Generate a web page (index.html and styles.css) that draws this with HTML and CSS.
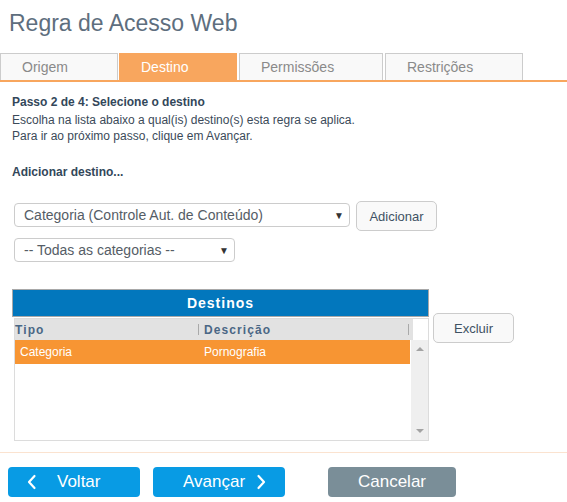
FILE: index.html
```html
<!DOCTYPE html>
<html lang="pt">
<head>
<meta charset="utf-8">
<title>Regra de Acesso Web</title>
<link rel="stylesheet" href="styles.css">
</head>
<body>
<h1 class="title">Regra de Acesso Web</h1>
<nav class="tabs">
  <div class="tab tab-origem">Origem</div>
  <div class="tab tab-destino active">Destino</div>
  <div class="tab tab-perm">Permissões</div>
  <div class="tab tab-restr">Restrições</div>
</nav>
<main class="content">
  <p class="step-title">Passo 2 de 4: Selecione o destino</p>
  <p class="desc">Escolha na lista abaixo a qual(is) destino(s) esta regra se aplica.<br>Para ir ao próximo passo, clique em Avançar.</p>
  <p class="add-label">Adicionar destino...</p>
  <div class="select-row">
    <div class="select select-main"><span>Categoria (Controle Aut. de Conteúdo)</span><span class="caret">▼</span></div>
    <button class="btn-light btn-add">Adicionar</button>
  </div>
  <div class="select select-sub"><span>-- Todas as categorias --</span><span class="caret">▼</span></div>
  <div class="table-row">
    <div class="table-wrap">
      <div class="table-title">Destinos</div>
      <div class="table-box">
        <div class="thead">
          <div class="thead-cols">
            <span class="th th-tipo">Tipo</span>
            <span class="sep"></span>
            <span class="th th-desc">Descrição</span>
            <span class="sep sep-end"></span>
          </div>
        </div>
        <div class="tbody-wrap">
          <div class="tbody">
            <div class="tr selected"><span class="td td-tipo">Categoria</span><span class="td">Pornografia</span></div>
          </div>
          <div class="scrollbar">
            <span class="arrow up"></span>
            <span class="arrow down"></span>
          </div>
        </div>
      </div>
    </div>
    <button class="btn-light btn-excluir">Excluir</button>
  </div>
</main>
<footer class="footer">
  <button class="btn btn-blue btn-voltar"><svg width="10" height="16" viewBox="0 0 10 16"><path d="M7.5 2 L2 8 L7.5 14" fill="none" stroke="#fff" stroke-width="2.2" stroke-linecap="round" stroke-linejoin="round"/></svg><span>Voltar</span></button>
  <button class="btn btn-blue btn-avancar"><span>Avançar</span><svg width="10" height="16" viewBox="0 0 10 16"><path d="M2.5 2 L8 8 L2.5 14" fill="none" stroke="#fff" stroke-width="2.2" stroke-linecap="round" stroke-linejoin="round"/></svg></button>
  <button class="btn btn-gray btn-cancelar">Cancelar</button>
</footer>
</body>
</html>
```
FILE: styles.css
```css
* { box-sizing: border-box; }
html, body { margin: 0; padding: 0; background: #fff; }
body {
  font-family: "Liberation Sans", Arial, sans-serif;
  color: #3b4a59;
  width: 567px;
  height: 502px;
  overflow: hidden;
}
.title {
  margin: 0;
  padding: 10px 9px 0;
  font-size: 23px;
  line-height: 26px;
  font-weight: normal;
  color: #5e6e7e;
}
.tabs {
  display: flex;
  gap: 2px;
  margin-top: 17px;
  border-bottom: 2px solid #f8a65e;
}
.tab {
  height: 27px;
  border: 1px solid #cccccc;
  border-bottom: none;
  background: #f9f9f9;
  color: #8a8a8a;
  font-size: 14px;
  display: flex;
  align-items: center;
  padding-left: 21px;
}
.tab-origem { width: 118px; margin-right: -1px; }
.tab-destino { width: 118px; }
.tab-perm { width: 144px; }
.tab-restr { width: 138px; }
.tab.active {
  background: #f8a65e;
  border-color: #f8a65e;
  color: #fff;
}
.content { padding: 0 12px; }
.step-title {
  margin: 12px 0 0;
  font-size: 12px;
  line-height: 16px;
  font-weight: bold;
  color: #33475a;
}
.desc {
  margin: 2px 0 0;
  font-size: 12px;
  line-height: 16px;
  color: #3b4a59;
}
.add-label {
  margin: 20px 0 0;
  font-size: 12px;
  line-height: 16px;
  font-weight: bold;
  color: #33475a;
}
.select-row {
  display: flex;
  align-items: flex-start;
  gap: 6px;
  margin-top: 21px;
  padding-left: 2px;
}
.select {
  display: flex;
  align-items: center;
  justify-content: space-between;
  height: 24px;
  border: 1px solid #cccccc;
  border-radius: 4px;
  background: #fff;
  color: #555d66;
  font-size: 14px;
  padding: 0 5px 0 9px;
}
.caret { font-size: 10px; color: #333; }
.select-main { width: 336px; margin-top: 2px; }
.select-sub { width: 221px; margin: 7px 0 0 2px; }
.btn-light {
  font-family: "Liberation Sans", Arial, sans-serif;
  font-size: 13px;
  color: #3f5264;
  background: #f9f9f9;
  border: 1px solid #cccccc;
  border-radius: 5px;
  height: 30px;
  width: 81px;
  padding: 0;
}
.table-row {
  display: flex;
  align-items: flex-start;
  margin-top: 27px;
}
.table-wrap { width: 417px; }
.table-title {
  height: 28px;
  background: #0277bd;
  border: 1px solid #a8a8a8;
  color: #fff;
  font-weight: bold;
  font-size: 14px;
  letter-spacing: 1px;
  display: flex;
  align-items: center;
  justify-content: center;
}
.table-box {
  margin: 1px 0 0 2px;
  border: 1px solid #dcdcdc;
  height: 123px;
  display: flex;
  flex-direction: column;
}
.thead { height: 21px; display: flex; }
.thead-cols {
  width: 398px;
  background: #e2e2e2;
  display: flex;
  align-items: center;
  font-size: 12px;
  font-weight: bold;
  letter-spacing: 1.1px;
  color: #4a6785;
}
.th-tipo { width: 183px; }
.th-desc { flex: 1; }
.sep {
  width: 1px;
  height: 11px;
  background: #a9a9a9;
  margin-right: 5px;
}
.sep-end { margin-right: 4px; }
.tbody-wrap { flex: 1; display: flex; }
.tbody { width: 395px; }
.tr {
  height: 24px;
  display: flex;
  align-items: center;
  font-size: 12px;
  color: #fff;
}
.tr.selected { background: #f79533; }
.td-tipo { width: 189px; padding-left: 5px; }
.scrollbar {
  width: 17px;
  margin-left: 1px;
  background: #efefef;
  display: flex;
  flex-direction: column;
  justify-content: space-between;
  align-items: center;
  padding: 7px 0 7px;
}
.arrow {
  width: 0;
  height: 0;
  border-left: 4px solid transparent;
  border-right: 4px solid transparent;
}
.arrow.up { border-bottom: 4px solid #a3a3a3; }
.arrow.down { border-top: 4px solid #a3a3a3; }
.btn-excluir { margin: 24px 0 0 4px; }
.footer {
  margin-top: 11px;
  border-top: 1px solid #fbe3d0;
  padding: 14px 0 0 8px;
  display: flex;
  align-items: center;
}
.btn {
  height: 30px;
  border: none;
  border-radius: 4px;
  color: #fff;
  font-family: "Liberation Sans", Arial, sans-serif;
  font-size: 17px;
  display: flex;
  align-items: center;
  padding: 0;
}
.btn-blue { background: #089be4; }
.btn-gray { background: #7a8e98; justify-content: center; }
.btn-voltar { width: 132px; padding-left: 19px; gap: 20px; }
.btn-avancar { width: 132px; padding-left: 30px; gap: 11px; margin-left: 13px; }
.btn-cancelar { width: 128px; margin-left: 43px; }
```
